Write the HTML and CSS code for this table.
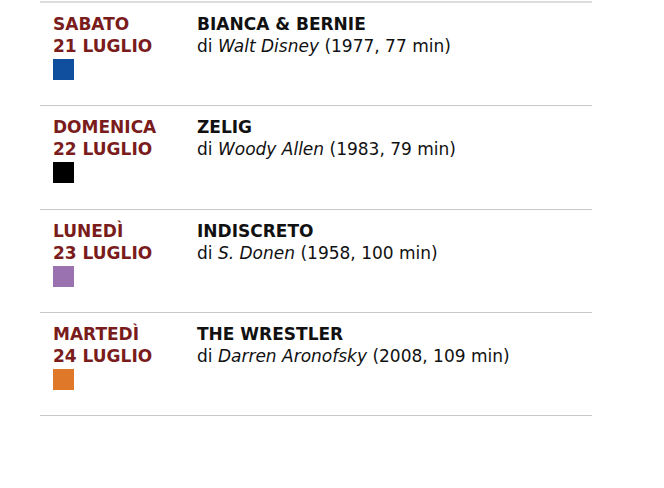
FILE: index.html
```html
<!DOCTYPE html>
<html lang="it">
<head>
<meta charset="utf-8">
<title>Programma</title>
<link rel="stylesheet" href="styles.css">
</head>
<body>
<ul class="schedule">
  <li class="row">
    <div class="date">
      <div class="day">SABATO</div>
      <div class="day">21 LUGLIO</div>
      <span class="swatch swatch-blue"></span>
    </div>
    <div class="film">
      <div class="title">BIANCA &amp; BERNIE</div>
      <div class="info">di <em>Walt Disney</em> (1977, 77 min)</div>
    </div>
  </li>
  <li class="row">
    <div class="date">
      <div class="day">DOMENICA</div>
      <div class="day">22 LUGLIO</div>
      <span class="swatch swatch-black"></span>
    </div>
    <div class="film">
      <div class="title">ZELIG</div>
      <div class="info">di <em>Woody Allen</em> (1983, 79 min)</div>
    </div>
  </li>
  <li class="row">
    <div class="date">
      <div class="day">LUNEDÌ</div>
      <div class="day">23 LUGLIO</div>
      <span class="swatch swatch-purple"></span>
    </div>
    <div class="film">
      <div class="title">INDISCRETO</div>
      <div class="info">di <em>S. Donen</em> (1958, 100 min)</div>
    </div>
  </li>
  <li class="row">
    <div class="date">
      <div class="day">MARTEDÌ</div>
      <div class="day">24 LUGLIO</div>
      <span class="swatch swatch-orange"></span>
    </div>
    <div class="film">
      <div class="title">THE WRESTLER</div>
      <div class="info">di <em>Darren Aronofsky</em> (2008, 109 min)</div>
    </div>
  </li>
</ul>
</body>
</html>
```
FILE: styles.css
```css
html, body {
  margin: 0;
  padding: 0;
  background: #ffffff;
}
body {
  font-family: "DejaVu Sans", "Liberation Sans", sans-serif;
  color: #111111;
}
.schedule {
  list-style: none;
  margin: 1px 0 0 40px;
  padding: 0;
  width: 552px;
  border-top: 2px solid #dddddd;
}
.row {
  display: flex;
  box-sizing: border-box;
  height: 103px;
  border-bottom: 1px solid #c8c8c8;
  padding: 10px 0 0 13px;
}
.row:nth-child(2) {
  height: 104px;
}
.date {
  width: 144px;
  display: flex;
  flex-direction: column;
  align-items: flex-start;
}
.day {
  color: #7a1c1c;
  font-weight: 700;
  font-size: 17px;
  line-height: 22px;
}
.swatch {
  display: block;
  width: 21px;
  height: 21px;
  margin-top: 2px;
}
.swatch-blue { background: #0f4f9e; }
.swatch-black { background: #000000; }
.swatch-purple { background: #9a72b0; }
.swatch-orange { background: #e07829; }
.film {
  display: flex;
  flex-direction: column;
}
.title {
  font-weight: 700;
  font-size: 17px;
  line-height: 22px;
  color: #111111;
}
.info {
  font-size: 17px;
  line-height: 22px;
}
.info em {
  font-style: italic;
}
```
